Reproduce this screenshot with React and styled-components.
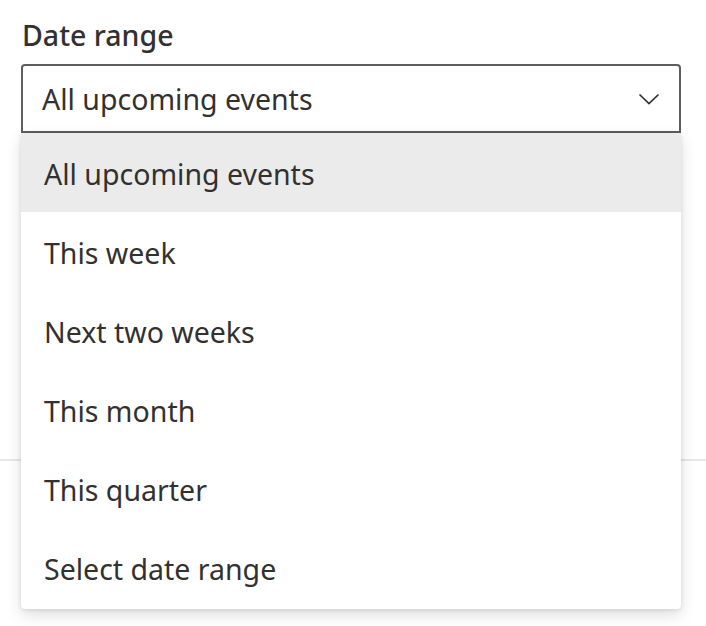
import styled, { createGlobalStyle } from 'styled-components';

const GlobalStyle = createGlobalStyle`
  body {
    margin: 0;
    background: #ffffff;
    font-family: 'Noto Sans', 'Open Sans', sans-serif;
    color: #323130;
  }
`;

const Page = styled.div`
  width: 706px;
  height: 626px;
  overflow: hidden;
  padding-top: 16px;
  box-sizing: border-box;
`;

const Field = styled.div`
  position: relative;
  margin: 0 25px 0 21px;
`;

const Label = styled.div`
  font-size: 28.5px;
  font-weight: 500;
  line-height: 38px;
  padding-left: 1px;
  margin-bottom: 10px;
`;

const SelectBox = styled.div`
  height: 69px;
  box-sizing: border-box;
  border: 2px solid #605e5c;
  border-radius: 4px 4px 0 0;
  display: flex;
  align-items: center;
  justify-content: space-between;
  padding: 0 19px;
  font-size: 28.5px;
`;

const Chevron = styled.svg`
  width: 22px;
  height: 12px;
  display: block;
`;

const Menu = styled.ul`
  position: absolute;
  top: 100%;
  left: 0;
  right: 0;
  margin: 0;
  padding: 0 0 2px;
  list-style: none;
  background: #ffffff;
  border-radius: 0 0 4px 4px;
  box-shadow: 0 6px 16px rgba(0, 0, 0, 0.13), 0 1px 4px rgba(0, 0, 0, 0.1);
  z-index: 2;
`;

const Item = styled.li`
  height: 79px;
  display: flex;
  align-items: center;
  padding-left: 23px;
  padding-top: 3px;
  box-sizing: border-box;
  font-size: 28.5px;
  background: ${(p) => (p.$active ? '#ebebeb' : 'transparent')};
`;

const Divider = styled.div`
  height: 2px;
  background: #e8e8e8;
  margin-top: 326px;
`;

const options = [
  'All upcoming events',
  'This week',
  'Next two weeks',
  'This month',
  'This quarter',
  'Select date range',
];

export default function App() {
  return (
    <Page>
      <GlobalStyle />
      <Field>
        <Label>Date range</Label>
        <SelectBox>
          <span>All upcoming events</span>
          <Chevron viewBox="0 0 22 12">
            <path d="M1.5 1.5 L11 10.5 L20.5 1.5" fill="none" stroke="#323130" strokeWidth="1.7" />
          </Chevron>
        </SelectBox>
        <Menu>
          {options.map((o, i) => (
            <Item key={o} $active={i === 0}>{o}</Item>
          ))}
        </Menu>
      </Field>
      <Divider />
    </Page>
  );
}
